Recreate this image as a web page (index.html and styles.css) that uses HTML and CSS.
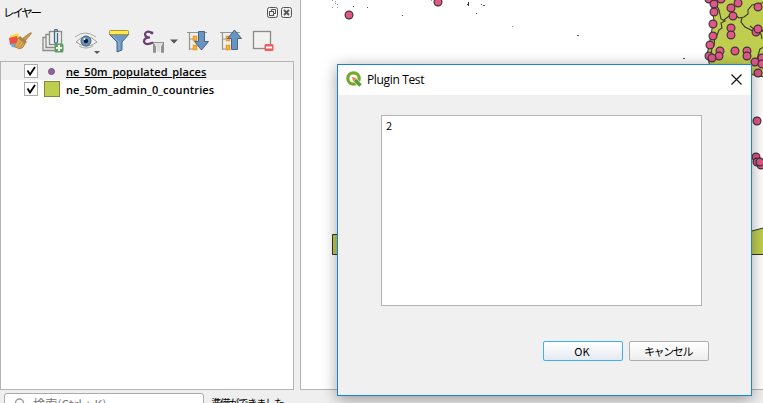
FILE: index.html
```
<!DOCTYPE html>
<html lang="ja">
<head>
<meta charset="utf-8">
<title>Plugin Test</title>
<link rel="stylesheet" href="styles.css">
</head>
<body>
<div class="app">
  <div class="workspace">
    <aside class="panel">
      <header class="panel-head">
        <span class="panel-title">レイヤー</span>
        <svg class="panel-controls" viewBox="0 0 26 12">
          <g fill="none" stroke="#555">
            <rect x=".5" y=".5" width="10" height="10" rx="2"/><rect x="14.500" y=".5" width="10" height="10" rx="2"/>
            <rect x="2.500" y="4.500" width="4" height="4"/><path d="M4.500 4V2.500h4v4H7"/>
            <path d="m17 3 5 5m0-5-5 5" stroke-width="1.800"/>
          </g>
        </svg>
      </header>
      <div class="toolbar">
        <svg class="icon i-style" viewBox="8 29 24 24">
          <path d="m10 36 8-3 2 6-10 3z" fill="#f8dc3c"/><path d="m9 38 8-2 2 8-9 1z" fill="#ee4f4a"/><path d="m10 44 7-1 5 6-10-2z" fill="#6aaee8"/>
          <path d="m23 38 7-5q2-1 1 1l-6 7z" fill="#c99b51" stroke="#94702f" stroke-width=".7"/>
          <path d="m20 36 7 6-2 2-7-6z" fill="#ad8342"/><path d="m18 38 7 6q-1 4-6 5l-5-3q3-3 4-8z" fill="#dda852" stroke="#a4793b" stroke-width=".7"/>
          <path d="m17 47 4-5m-1 6 3-5" stroke="#b48440" stroke-width=".7"/>
        </svg>
        <svg class="icon i-group" viewBox="41 29 24 24">
          <g fill="none" stroke="#8b8b85" stroke-width="1.300"><path d="M46 37.500h-3v13h12"/><path d="M49 34.500h-3v13h9"/><rect x="49.500" y="31.500" width="12" height="13"/></g>
          <path d="M57.500 33v9q-1.500 3-3 0V32q0-3 1.500-3t1.500 3" fill="none" stroke="#3b6986" stroke-width="1.300"/>
          <rect x="54.500" y="43.500" width="9" height="9" rx="1.500" fill="#5aa35e"/><path d="M59 45v6m-3-3h6" stroke="#fff" stroke-width="2"/>
        </svg>
        <svg class="icon i-eye" viewBox="75 29 26 26">
          <path d="M76 42q10-11 21 0-10 8-21 0" fill="#f5f5f1" stroke="#9c9c96"/>
          <path d="M75 37q10-8 21 0M79 46q7 4 14 0" fill="none" stroke="#aaa9a1"/>
          <circle cx="86" cy="41" r="5" fill="#6992bd" stroke="#44678b"/><circle cx="86" cy="41" r="2.200" fill="#151c29"/><circle cx="84.500" cy="39" r="1" fill="#fff"/>
          <path d="M94 51h6l-3 3z" fill="#555"/>
        </svg>
        <svg class="icon i-filter" viewBox="108 29 24 24">
          <path d="m109 34 8 8v10l5-2v-8l7-8z" fill="#6b97c4" stroke="#45688d"/><path d="m113 36 6 6v8" fill="none" stroke="#93b8dc"/>
          <rect x="109.500" y="30.500" width="19" height="4" rx=".8" fill="#ffe94e" stroke="#ad9432"/>
        </svg>
        <svg class="icon i-expression" viewBox="141 29 38 26">
          <path d="M152 33q-6-3-7 1 0 3.500 5 3.500-6 0-6 4 1 4.500 9 1" fill="none" stroke="#67406f" stroke-width="2.200"/><circle cx="152" cy="33" r="1.400" fill="#67406f"/>
          <path d="M153 42h11v10.500h-3V47l2-4h-9l2 4v5.500h-3z" fill="#91918b"/><path d="M153 43l3 4v5.500h-3zM164 43l-3 4v5.500h3z" fill="#91918b"/><path d="m155 43.500 2 3v5h3v-5l2-3z" fill="#ddd"/>
          <path d="M170 39.500h8l-4 4z" fill="#555"/>
        </svg>
        <svg class="icon i-expand" viewBox="186 29 24 24">
          <path d="M187 32.500h20M189.500 32v18m0-11h4m-4 10h4" fill="none" stroke="#969690" stroke-width="1.200"/>
          <path d="M193.500 36.500h3v4h-3zm0 9h3v4h-3z" fill="#ffc34c" stroke="#ef9920" stroke-width="1.500"/>
          <path d="M198.500 31.500h6v10h4l-7 8.500-7-8.500h4z" fill="#6993c1" stroke="#42658b"/>
        </svg>
        <svg class="icon i-collapse" viewBox="219 29 24 24">
          <path d="M220 32.500h20M222.500 32v18m0-11h4m-4 10h4" fill="none" stroke="#969690" stroke-width="1.200"/>
          <path d="M226.500 36.500h3v4h-3zm0 9h3v4h-3z" fill="#ffc34c" stroke="#ef9920" stroke-width="1.500"/>
          <path d="M231.500 49.500h6v-11h4l-7-8.500-7 8.500h4z" fill="#6993c1" stroke="#42658b"/>
        </svg>
        <svg class="icon i-remove" viewBox="252 29 24 24">
          <rect x="253.500" y="31.500" width="17" height="17" fill="#f2f2f1" stroke="#8b8b85" stroke-width="1.300"/>
          <rect x="264.500" y="44" width="9" height="7" rx="1.500" fill="#f15b5b"/><path d="M266 47.500h6" stroke="#fff" stroke-width="2"/>
        </svg>
      </div>
      <div class="tree">
        <div class="layer selected">
          <span class="check"><svg viewBox="0 0 12 12"><path d="m2.500 5.500 2.500 4 5-7.500"/></svg></span>
          <span class="swatch"><i class="point"></i></span>
          <span class="layer-name places">ne_50m_populated_places</span>
        </div>
        <div class="layer">
          <span class="check"><svg viewBox="0 0 12 12"><path d="m2.500 5.500 2.500 4 5-7.500"/></svg></span>
          <span class="swatch"><i class="polygon"></i></span>
          <span class="layer-name countries">ne_50m_admin_0_countries</span>
        </div>
      </div>
    </aside>
    <main class="map">
      <svg viewBox="301 0 462 389">
        <g fill="#c0ce50" stroke="#30332b">
          <path d="m713-2-1 12 2 10-3 14-2 12-2 8 3 13 55 10V-2z"/>
          <path d="M345 234.500h-12.500v20H345M750 231.500l15-4v27h-15"/>
        </g>
        <path d="m716 4 3 6 2 9 4 2-4 2 1 5-3 2-2 5-2 1-1 10-2 1-1 11m13-38 5-4 6-1 4 3 5-1 4-3 0-4 4-5 5-1 10-2m-25 16-1 4 4 5 10 5 4 1 4-3 4 1m-17-5 8 6 6-1m-7 28 3-10 6-3m-9-15 4 3 1 5" fill="none" stroke="#33372d" stroke-width="1.100"/>
        <g class="pins" fill="#df5888" stroke="#41323c" stroke-width="1.200">
          <circle cx="349" cy="15" r="3.900"/><circle cx="438" cy="2" r="3.900"/>
          <circle cx="709" cy="-1" r="3.900"/><circle cx="721" cy="-1" r="3.900"/><circle cx="714" cy="4" r="3.900"/><circle cx="714" cy="12" r="3.900"/><circle cx="738" cy="3" r="3.900"/><circle cx="731" cy="8" r="3.900"/><circle cx="733" cy="16" r="3.900"/><circle cx="758" cy="7" r="3.900"/><circle cx="713" cy="24" r="3.900"/><circle cx="731" cy="28" r="3.900"/><circle cx="731" cy="35" r="3.900"/><circle cx="713" cy="36" r="3.900"/><circle cx="756" cy="32" r="3.900"/><circle cx="758" cy="29" r="3.900"/><circle cx="710" cy="45" r="3.900"/><circle cx="720" cy="51" r="3.900"/><circle cx="719" cy="56" r="3.900"/><circle cx="709" cy="56" r="3.900"/><circle cx="712" cy="58" r="3.900"/><circle cx="735" cy="51" r="3.900"/><circle cx="747" cy="51" r="3.900"/><circle cx="747" cy="56" r="3.900"/><circle cx="762" cy="58" r="3.900"/><circle cx="755" cy="62" r="3.900"/><circle cx="762" cy="64" r="3.900"/><circle cx="758" cy="73" r="3.900"/><circle cx="757" cy="121" r="3.900"/><circle cx="756" cy="157" r="3.900"/><circle cx="757" cy="162" r="3.900"/><circle cx="761" cy="165" r="3.900"/><circle cx="760" cy="162" r="3.900"/>
        </g>
        <path d="M332 .5h1M335 1.500h1M335 3.500h1M337 4.500h1M332 7.500h1M337 7.500h1M431 .5h1M512 26.500h1" stroke="#999"/>
        <path d="M353 6.500h1M367 7.500h1M402 15.500h1M476 13.500h1M481 4.500h1M483 5.500h2M577 35.500h2M683 58.500h2" stroke="#555"/>
        <path d="M468.500 2v4M467 4.500h2" stroke="#333"/>
      </svg>
    </main>
  </div>
  <footer class="status">
    <div class="search"><svg viewBox="0 0 12 12"><circle cx="6.500" cy="5" r="4" fill="none" stroke="#999" stroke-width="1.400"/><path d="m4 8-3 3" stroke="#999" stroke-width="1.500"/></svg><span>検索(Ctrl + K)</span></div>
    <span class="ready">準備ができました</span>
  </footer>
</div>
<section class="dialog">
  <header class="dialog-head">
    <svg class="logo" viewBox="0 0 16 16">
      <circle cx="7.500" cy="7.500" r="5.700" fill="none" stroke="#75a92e" stroke-width="3.200"/>
      <path d="m8.500 8.500 6 6" stroke="#efefef" stroke-width="4.500"/><path d="m9 9 5.500 5.500" stroke="#579a31" stroke-width="3.200"/>
      <path d="m6 6 4.500 1-3.500 3.500z" fill="#ef8138"/>
    </svg>
    <span class="dialog-title">Plugin Test</span>
    <svg class="close" viewBox="0 0 11 11"><path d="m.5.5 10 10m0-10-10 10" stroke="#111" stroke-width="1.150"/></svg>
  </header>
  <div class="dialog-body">
    <div class="list">2</div>
    <div class="buttons"><button class="button primary">OK</button><button class="button"><span>キャンセル</span></button></div>
  </div>
</section>
</body>
</html>
```
FILE: styles.css
```
* { box-sizing: border-box; }
body { margin: 0; background: #efefef; color: #000; font-family: "Open Sans", "Noto Sans CJK JP", sans-serif; font-size: 11px; overflow: hidden; }
svg { display: block; flex: none; }
.app { height: 403px; display: flex; flex-direction: column; overflow: hidden; }
.workspace { display: grid; grid-template-columns: 294px 1fr; column-gap: 6px; height: 390px; flex: none; }
.panel { display: flex; flex-direction: column; }
.panel-head { height: 25px; display: flex; justify-content: space-between; padding: 7px 1px 0 3px; }
.panel-title { font-family: "Noto Sans CJK JP", sans-serif; font-size: 11.5px; line-height: 10px; letter-spacing: -2.2px; }
.panel-controls { width: 26px; height: 12px; }
.toolbar { height: 36px; display: flex; padding: 4px 0 0 8px; gap: 9px; }
.icon { width: 24px; height: 24px; }
.i-eye { width: 26px; height: 26px; margin: 0 -1px; margin-left: 1px; }
.i-filter { margin-left: -1px; }
.i-expression { width: 38px; height: 26px; margin-right: -2px; }
.tree { flex: 1; border: 1px solid #b4b4b4; background: #fff; }
.layer { height: 18px; display: flex; align-items: center; padding-left: 23px; }
.selected { background: #f0f0f0; }
.check { width: 14px; height: 14px; border: 1px solid #aaa; background: #fff; margin-right: 5px; }
.check svg { width: 12px; height: 12px; }
.check path { fill: none; stroke: #000; stroke-width: 1.8; }
.swatch { width: 18px; display: flex; justify-content: center; margin-right: 5px; }
.point { width: 7px; height: 7px; border-radius: 50%; background: #94609d; border: 1px solid #73557a; margin-right: 1px; }
.polygon { width: 16px; height: 16px; background: #bfce4f; border: 1px solid #80893c; }
.layer-name { font-size: 11px; font-weight: 600; white-space: nowrap; line-height: 16px; padding-top: 1px; }
.places { text-decoration: underline; text-underline-offset: 1px; letter-spacing: .09px; }
.countries { letter-spacing: .13px; }
.map { border: solid #b4b4b4; border-width: 0 0 1px 1px; background: #fff; overflow: hidden; }
.map svg { width: 462px; height: 389px; }
.status { height: 13px; display: flex; padding: 3px 0 0 4px; gap: 8px; }
.search { width: 200px; height: 24px; flex: none; display: flex; gap: 8px; padding: 4px 8px; border: 1px solid #aaa; border-radius: 3px; background: #fff; color: #777; }
.search svg { width: 12px; height: 12px; }
.search span { font: 12px/12px "Noto Sans CJK JP", sans-serif; letter-spacing: .15px; white-space: nowrap; }
.ready { font: 10.5px/14px "Noto Sans CJK JP", sans-serif; letter-spacing: -1.5px; padding-top: 3px; margin-left: -1px; white-space: nowrap; }
.dialog { position: absolute; left: 337px; top: 64px; width: 415px; height: 332px; border: 1px solid #1883d7; background: #f0f0f0; box-shadow: 0 3px 14px rgba(0,0,0,.38); }
.dialog-head { height: 30px; background: #fff; display: flex; align-items: center; padding: 0 9px 2px 8px; }
.logo { width: 16px; height: 16px; margin-right: 5px; }
.dialog-title { font-size: 12px; letter-spacing: -.35px; }
.close { width: 11px; height: 11px; margin-left: auto; }
.dialog-body { padding: 20px 42px 0 43px; display: flex; flex-direction: column; }
.list { width: 321px; height: 191px; border: 1px solid #b4b4b4; background: #fff; padding: 2px 4px; font-family: "Noto Sans CJK JP", sans-serif; font-size: 11px; line-height: 15px; }
.buttons { display: flex; gap: 6px; padding: 35px 0 0 162px; }
.button { width: 80px; height: 20px; flex: none; padding: 0 2px 1px 0; border: 1px solid #adadad; border-radius: 2px; background: linear-gradient(#fff, #ededed); color: #000; font: 11px/16px "Noto Sans CJK JP", sans-serif; letter-spacing: -1.4px; white-space: nowrap; }
.primary { border-color: #3daefa; background: linear-gradient(#fff, #e4eaf0); letter-spacing: 0; }
```
